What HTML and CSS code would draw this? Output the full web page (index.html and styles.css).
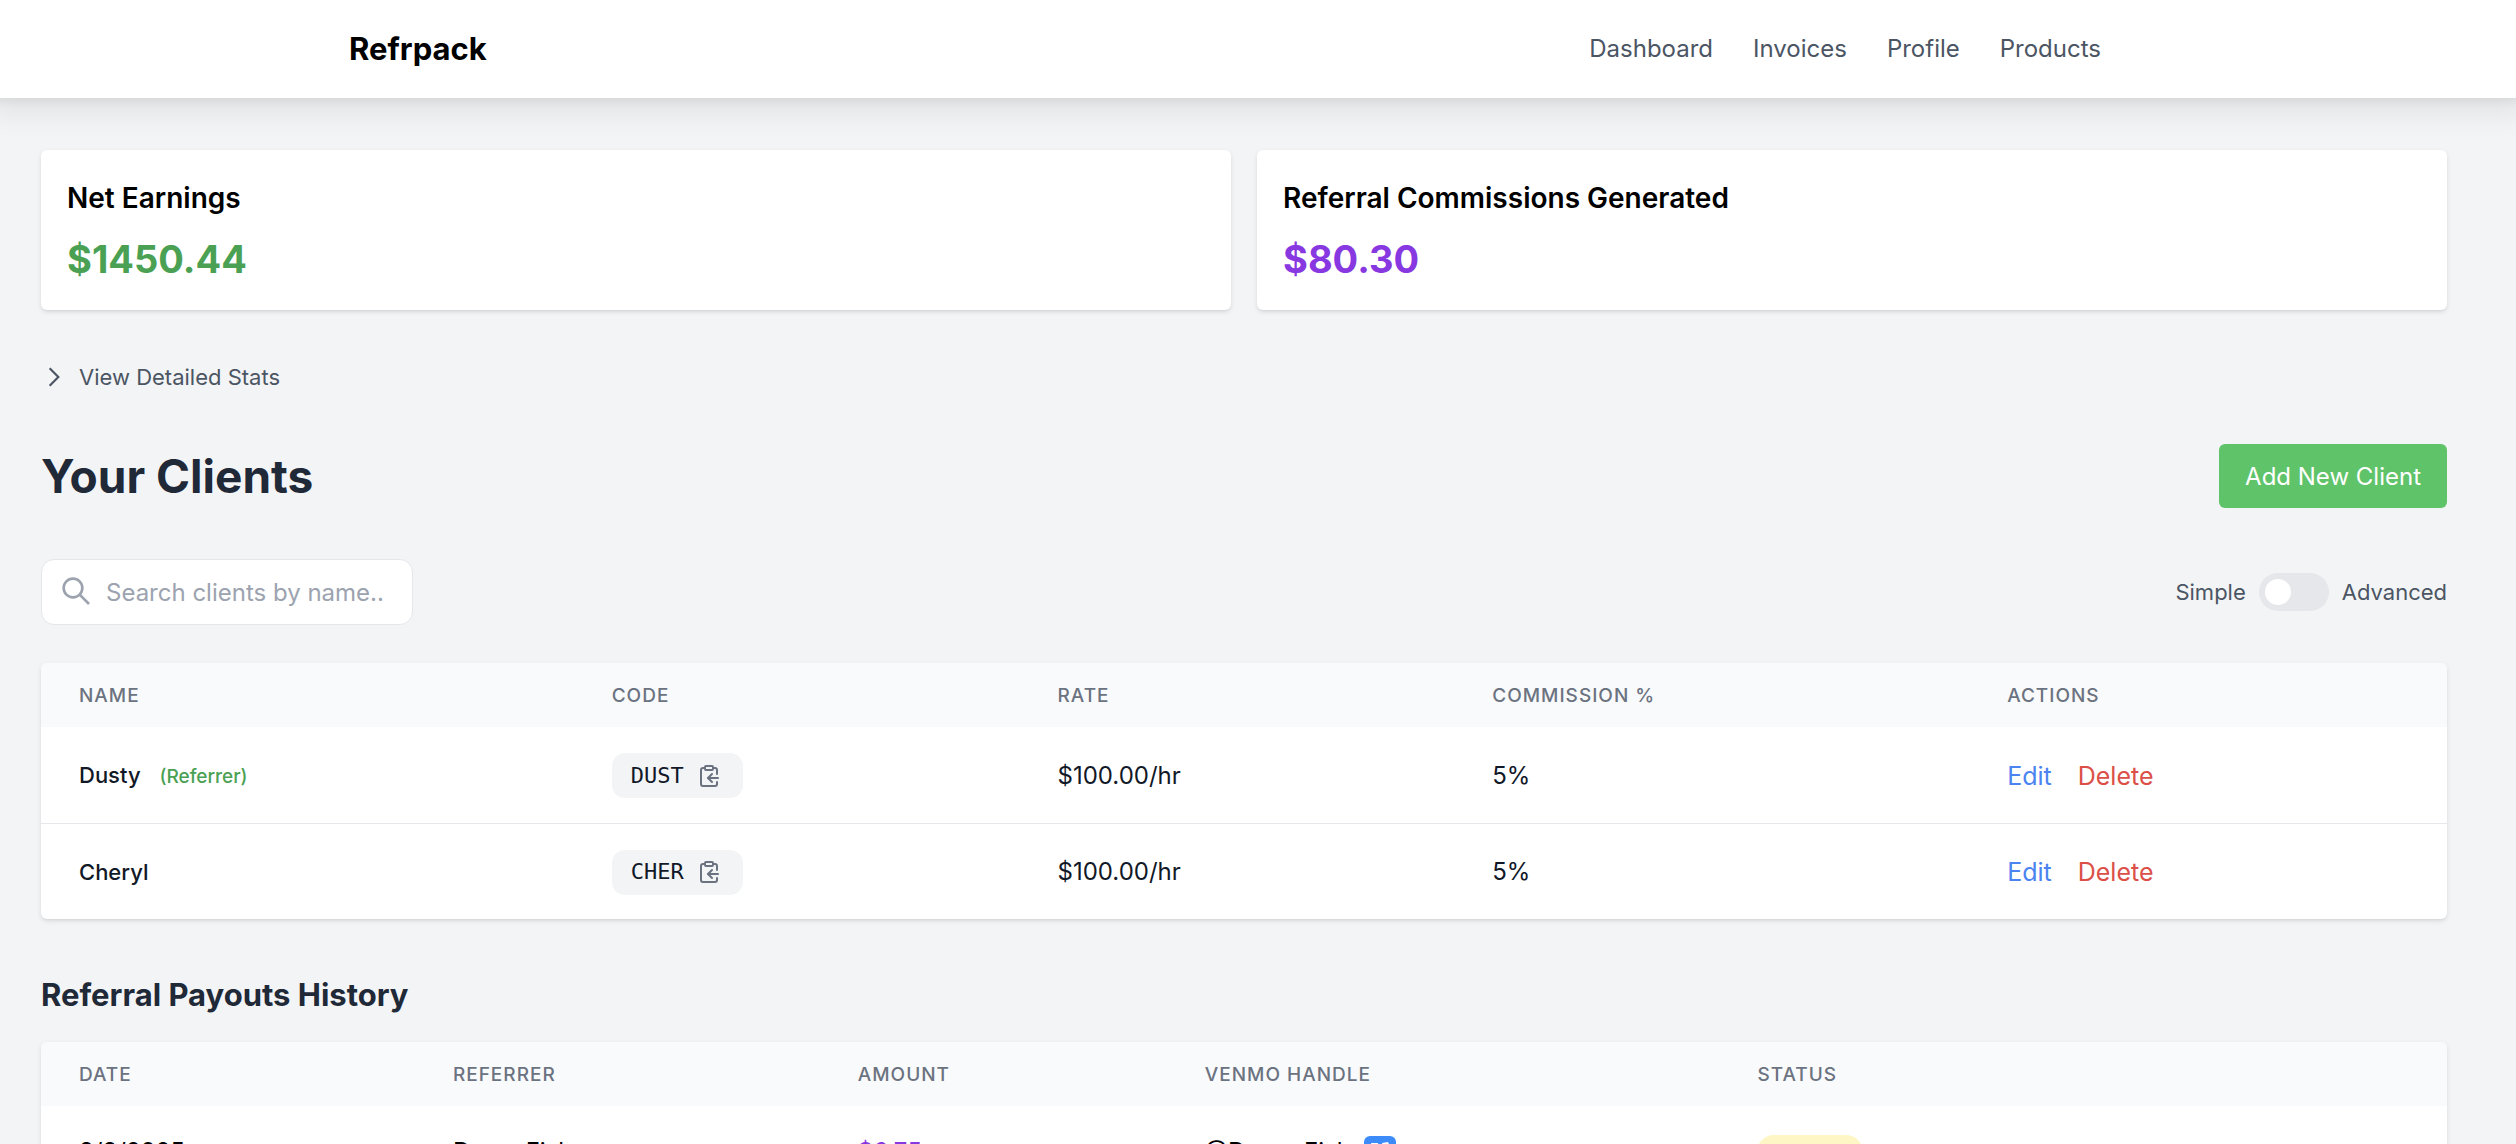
FILE: index.html
```html
<!DOCTYPE html>
<html lang="en">
<head>
  <meta charset="utf-8">
  <meta name="viewport" content="width=device-width, initial-scale=1">
  <title>Refrpack</title>
  <link rel="stylesheet" href="styles.css">
</head>
<body>
  <svg class="sprite" aria-hidden="true">
    <symbol id="clipboard" viewBox="0 0 24 24">
      <path d="M8 4H6a2 2 0 0 0-2 2v14a2 2 0 0 0 2 2h12a2 2 0 0 0 2-2v-2"/>
      <path d="M16 4h2a2 2 0 0 1 2 2v4"/>
      <rect x="8" y="2" width="8" height="4" rx="1"/>
      <path d="M21 14H11"/>
      <path d="m15 10-4 4 4 4"/>
    </symbol>
  </svg>

  <header class="topbar">
    <div class="topbar-inner">
      <a class="brand" href="#">Refrpack</a>
      <nav class="nav">
        <a href="#">Dashboard</a>
        <a href="#">Invoices</a>
        <a href="#">Profile</a>
        <a href="#">Products</a>
      </nav>
    </div>
  </header>

  <main class="page">
    <section class="stats">
      <article class="card stat">
        <h2>Net Earnings</h2>
        <p class="amount green">$1450.44</p>
      </article>
      <article class="card stat">
        <h2>Referral Commissions Generated</h2>
        <p class="amount purple">$80.30</p>
      </article>
    </section>

    <button class="details" type="button">
      <svg viewBox="0 0 24 24" aria-hidden="true"><path d="m8 4 8 8-8 8"/></svg>
      View Detailed Stats
    </button>

    <div class="heading-row">
      <h1>Your Clients</h1>
      <button class="add" type="button">Add New Client</button>
    </div>

    <div class="filter-row">
      <label class="search">
        <svg viewBox="0 0 24 24" aria-hidden="true"><circle cx="9" cy="9" r="7"/><path d="m14 14 7 7"/></svg>
        <input type="text" placeholder="Search clients by name.." aria-label="Search clients by name">
      </label>
      <label class="mode">
        <span>Simple</span>
        <input type="checkbox" role="switch" aria-label="Advanced mode">
        <span>Advanced</span>
      </label>
    </div>

    <div class="card">
      <table class="clients">
        <colgroup><col class="c1"><col class="c2"><col class="c3"><col class="c4"><col></colgroup>
        <thead>
          <tr><th>Name</th><th>Code</th><th>Rate</th><th>Commission %</th><th>Actions</th></tr>
        </thead>
        <tbody>
          <tr>
            <td class="name">Dusty <span class="tag">(Referrer)</span></td>
            <td><button class="code" type="button">DUST <svg aria-hidden="true"><use href="#clipboard"/></svg></button></td>
            <td>$100.00/hr</td>
            <td>5%</td>
            <td><div class="actions"><a class="edit" href="#">Edit</a><a class="delete" href="#">Delete</a></div></td>
          </tr>
          <tr>
            <td class="name">Cheryl</td>
            <td><button class="code" type="button">CHER <svg aria-hidden="true"><use href="#clipboard"/></svg></button></td>
            <td>$100.00/hr</td>
            <td>5%</td>
            <td><div class="actions"><a class="edit" href="#">Edit</a><a class="delete" href="#">Delete</a></div></td>
          </tr>
        </tbody>
      </table>
    </div>

    <h2 class="section-title">Referral Payouts History</h2>
    <div class="card">
      <table class="payouts">
        <colgroup><col class="p1"><col class="p2"><col class="p3"><col class="p4"><col></colgroup>
        <thead>
          <tr><th>Date</th><th>Referrer</th><th>Amount</th><th>Venmo Handle</th><th>Status</th></tr>
        </thead>
        <tbody>
          <tr>
            <td>3/3/2025</td>
            <td>Dusty Fish</td>
            <td class="purple">$6.75</td>
            <td>
              <div class="handle">@Dusty-Fish
                <svg viewBox="0 0 32 32" aria-hidden="true"><rect width="32" height="32" rx="6" fill="#3d8bf8"/><path fill="#fff" d="M24 6c1 1.500 1.400 3 1.400 5 0 6-5 11-8.400 15H10L7 7h7l1.500 11c1.500-2.500 3-6 3-8.500 0-1.200-.2-2-.5-2.500z"/></svg>
              </div>
            </td>
            <td><span class="status">Pending</span></td>
          </tr>
        </tbody>
      </table>
    </div>
  </main>
</body>
</html>
```
FILE: styles.css
```css
* { box-sizing: border-box; }

body {
  margin: 0;
  background: #f3f4f6;
  color: #000;
  font: 24px/38px Inter, "Liberation Sans", sans-serif;
}

h1, h2, p { margin: 0; }
a { color: inherit; text-decoration: none; }
button { border: 0; font: inherit; cursor: pointer; }
.sprite { display: none; }

.topbar {
  background: #fff;
  box-shadow: 0 4px 28px 10px rgba(0, 0, 0, .08), 0 0 8px 4px rgba(0, 0, 0, .05);
}
.topbar-inner {
  display: flex;
  align-items: center;
  justify-content: space-between;
  max-width: 1818px;
  height: 98px;
  margin: 0 auto;
  padding-right: 66px;
}
.brand { font-size: 31px; font-weight: 700; }
.nav { display: flex; gap: 40px; color: #4b5563; }

.page { padding: 52px 69px 52px 41px; }

.card {
  background: #fff;
  border-radius: 6px;
  box-shadow: 0 2px 5px rgba(0, 0, 0, .1), 0 2px 3px -2px rgba(0, 0, 0, .1);
  overflow: hidden;
}

.stats { display: grid; grid-template-columns: 1fr 1fr; gap: 26px; }
.stat { padding: 26px 26px 25px; }
.stat h2 { margin-bottom: 14px; font-size: 28px; font-weight: 600; line-height: 44px; }
.amount { font-size: 38px; font-weight: 700; line-height: 51px; }
.green { color: #4ba153; }
.purple { color: #8738e0; }

.details {
  display: flex;
  align-items: center;
  gap: 12px;
  margin-top: 48px;
  padding: 0;
  background: none;
  color: #4b5563;
  font-size: 22px;
}
.details svg { width: 26px; height: 26px; fill: none; stroke: currentColor; stroke-width: 2; }

.heading-row, .filter-row { display: flex; align-items: center; justify-content: space-between; }
.heading-row { margin-top: 48px; }
h1 { color: #1f2937; font-size: 46px; font-weight: 700; line-height: 58px; }
.add { height: 64px; padding: 2px 26px 0; border-radius: 6px; background: #5fc36a; color: #fff; }

.filter-row { margin: 51px 0 38px; }
.search {
  display: flex;
  align-items: center;
  gap: 13px;
  width: 372px;
  height: 66px;
  padding: 0 19px;
  border: 1px solid #e5e7eb;
  border-radius: 13px;
  background: #fff;
}
.search svg { flex: none; width: 32px; height: 32px; fill: none; stroke: #9ca3af; stroke-width: 2; }
.search input { width: 100%; min-width: 0; padding: 2px 0 0; border: 0; outline: 0; background: none; font: inherit; }
.search input::placeholder { color: #9ca3af; opacity: 1; }

.mode { display: flex; align-items: center; gap: 13px; color: #4b5563; font-size: 22px; }
.mode input {
  display: flex;
  align-items: center;
  appearance: none;
  width: 70px;
  height: 38px;
  margin: 0;
  padding: 0 6px;
  border-radius: 19px;
  background: #e5e7eb;
}
.mode input::before { content: ""; width: 26px; height: 26px; border-radius: 50%; background: #fff; }
.mode input:checked { justify-content: flex-end; background: #5fc36a; }

table { width: 100%; border-collapse: collapse; table-layout: fixed; }
th {
  height: 64px;
  padding: 2px 38px 0;
  background: #f9fafb;
  color: #6b7280;
  font-size: 19px;
  font-weight: 500;
  letter-spacing: 1px;
  text-align: left;
  text-transform: uppercase;
}
td { height: 96px; padding: 2px 38px 0; color: #111827; }
tbody tr + tr { border-top: 1px solid #e5e7eb; }
.c1 { width: 22.14%; }
.c2 { width: 18.53%; }
.c3 { width: 18.07%; }
.c4 { width: 21.4%; }
.p1 { width: 15.54%; }
.p2 { width: 16.83%; }
.p3 { width: 14.42%; }
.p4 { width: 22.97%; }

.name { font-size: 22px; font-weight: 500; }
.tag { margin-left: 13px; color: #4ba153; font-size: 19px; }
.code {
  display: inline-flex;
  align-items: center;
  gap: 13px;
  height: 45px;
  padding: 0 22px 0 19px;
  border-radius: 13px;
  background: #f3f4f6;
  color: #111827;
  font: 22px/32px "DejaVu Sans Mono", monospace;
}
.code svg { width: 24px; height: 24px; fill: none; stroke: #6b7280; stroke-width: 2; stroke-linecap: round; stroke-linejoin: round; }
.actions { display: flex; gap: 26px; font-size: 25px; }
.edit { color: #4b83f0; }
.delete { color: #dc4f48; }

.section-title { margin: 53px 0 25px; color: #1f2937; font-size: 31px; font-weight: 700; line-height: 45px; }
.payouts td { height: 90px; color: #000; }
.payouts .purple { color: #8738e0; }
.handle { display: flex; align-items: center; gap: 13px; }
.handle svg { width: 32px; height: 32px; }
.status {
  display: block;
  width: fit-content;
  padding: 2px 16px 0;
  border-radius: 17px;
  background: #fef7c5;
  color: #854d0e;
  font-size: 19px;
  line-height: 32px;
}
```
